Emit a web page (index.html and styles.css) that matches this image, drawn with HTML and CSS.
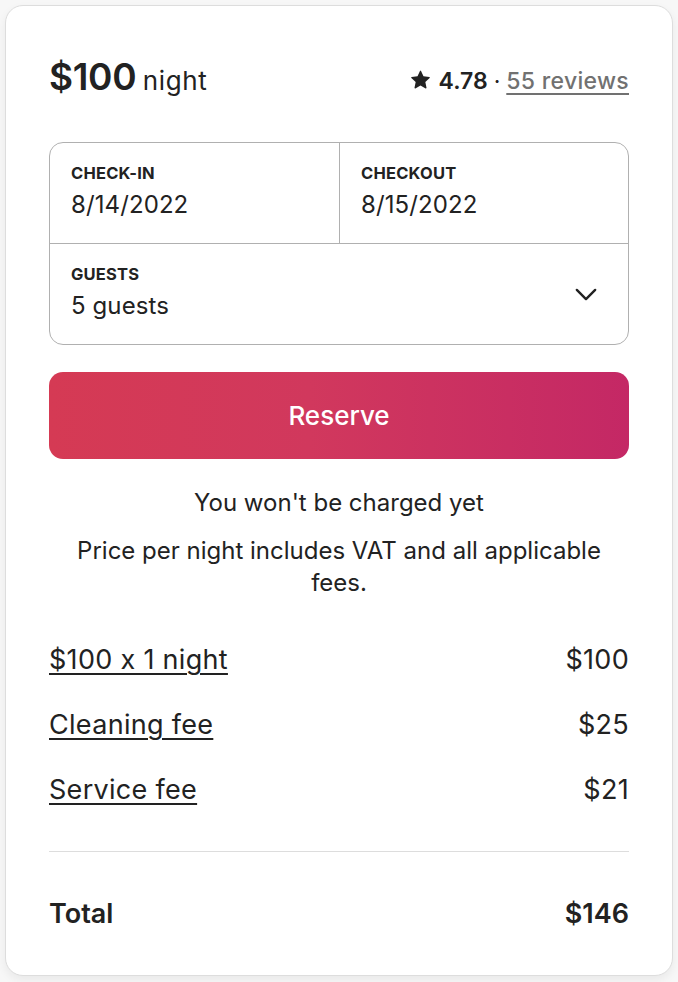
FILE: index.html
```html
<!DOCTYPE html>
<html lang="en">
<head>
<meta charset="utf-8">
<title>Reserve</title>
<link rel="stylesheet" href="styles.css">
</head>
<body>
<div class="card">
  <div class="header">
    <div class="price"><span class="amount">$100</span> <span class="per">night</span></div>
    <div class="rating">
      <svg class="star" viewBox="0 0 32 32" width="19" height="19" aria-hidden="true"><path d="M15.1 1.58l-4.13 8.88-9.86 1.27a1 1 0 0 0-.54 1.74l7.3 6.57-1.97 9.85a1 1 0 0 0 1.48 1.06l8.62-5 8.63 5a1 1 0 0 0 1.48-1.06l-1.97-9.85 7.3-6.57a1 1 0 0 0-.55-1.73l-9.86-1.28-4.12-8.88a1 1 0 0 0-1.82 0z" fill="#222"/></svg>
      <span class="score">4.78</span><span class="dot">·</span><a class="reviews" href="#">55 reviews</a>
    </div>
  </div>

  <div class="picker">
    <div class="dates">
      <div class="cell">
        <div class="label">CHECK-IN</div>
        <div class="value">8/14/2022</div>
      </div>
      <div class="cell cell-right">
        <div class="label">CHECKOUT</div>
        <div class="value">8/15/2022</div>
      </div>
    </div>
    <div class="cell guests">
      <div>
        <div class="label">GUESTS</div>
        <div class="value">5 guests</div>
      </div>
      <svg class="chevron" viewBox="0 0 24 14" width="22" height="13" aria-hidden="true"><path d="M2 2l10 10L22 2" fill="none" stroke="#222" stroke-width="2.6" stroke-linecap="round" stroke-linejoin="round"/></svg>
    </div>
  </div>

  <button class="reserve">Reserve</button>

  <p class="note first">You won't be charged yet</p>
  <p class="note">Price per night includes VAT and all applicable fees.</p>

  <div class="rows">
    <div class="row"><a href="#">$100 x 1 night</a><span>$100</span></div>
    <div class="row"><a href="#">Cleaning fee</a><span>$25</span></div>
    <div class="row"><a href="#">Service fee</a><span>$21</span></div>
  </div>

  <div class="total">
    <span>Total</span><span>$146</span>
  </div>
</div>
</body>
</html>
```

FILE: styles.css
```css
html, body {
  margin: 0;
  padding: 0;
  background: #f7f7f7;
}
body {
  font-family: "Inter", "Noto Sans", sans-serif;
  font-feature-settings: "calt" 0;
  color: #222222;
  padding: 5px 5px 6px 5px;
}
.card {
  box-sizing: border-box;
  width: 668px;
  height: 971px;
  background: #ffffff;
  border: 1px solid #dddddd;
  border-radius: 18px;
  box-shadow: 0 4px 10px rgba(0, 0, 0, 0.06);
  padding: 51px 43px 0 43px;
}
.header {
  display: flex;
  justify-content: space-between;
  align-items: baseline;
  height: 40px;
  line-height: 40px;
}
.amount {
  font-size: 37px;
  font-weight: 600;
  letter-spacing: -0.3px;
}
.per {
  font-size: 26px;
  font-weight: 400;
  letter-spacing: 0.6px;
  margin-left: 2px;
}
.rating {
  display: flex;
  align-items: center;
  font-size: 23px;
}
.star {
  margin-right: 9px;
  position: relative;
  top: -1px;
}
.score {
  font-weight: 600;
}
.dot {
  margin: 0 6px;
}
.reviews {
  color: #717171;
  font-weight: 500;
  font-size: 23px;
  letter-spacing: 0.3px;
  text-decoration: underline;
  text-underline-offset: 4px;
  text-decoration-thickness: 1.5px;
}
.picker {
  margin-top: 45px;
  border: 1px solid #b0b0b0;
  border-radius: 14px;
  overflow: hidden;
}
.dates {
  display: grid;
  grid-template-columns: 1fr 1fr;
  border-bottom: 1px solid #b0b0b0;
}
.cell {
  padding: 20px 22px 23px 21px;
}
.cell-right {
  border-left: 1px solid #b0b0b0;
}
.label {
  font-size: 16.5px;
  font-weight: 700;
  line-height: 20px;
  letter-spacing: 0.2px;
}
.value {
  font-size: 24px;
  line-height: 30px;
  margin-top: 7px;
  letter-spacing: 0.1px;
}
.guests {
  display: flex;
  justify-content: space-between;
  align-items: center;
}
.chevron {
  margin-right: 9px;
  margin-top: 4px;
}
.reserve {
  display: block;
  width: 100%;
  height: 87px;
  margin-top: 27px;
  border: none;
  border-radius: 14px;
  background: linear-gradient(to right, #d53a54 0%, #d1385d 45%, #c42865 100%);
  color: #ffffff;
  font-family: inherit;
  font-size: 26px;
  font-weight: 500;
}
.note {
  margin: 16px 0 0 0;
  text-align: center;
  font-size: 24px;
  line-height: 32px;
  padding: 0 20px;
}
.note.first {
  margin-top: 28px;
}
.rows {
  margin-top: 45px;
  display: flex;
  flex-direction: column;
  gap: 33px;
  padding-bottom: 45px;
  border-bottom: 1px solid #dddddd;
}
.row {
  display: flex;
  justify-content: space-between;
  font-size: 27px;
  line-height: 32px;
  letter-spacing: 0.3px;
}
.row a {
  color: #222222;
  text-decoration: underline;
  text-underline-offset: 4px;
  text-decoration-thickness: 1.5px;
}
.total {
  margin-top: 46px;
  display: flex;
  justify-content: space-between;
  font-size: 27px;
  font-weight: 600;
  line-height: 32px;
}
```
